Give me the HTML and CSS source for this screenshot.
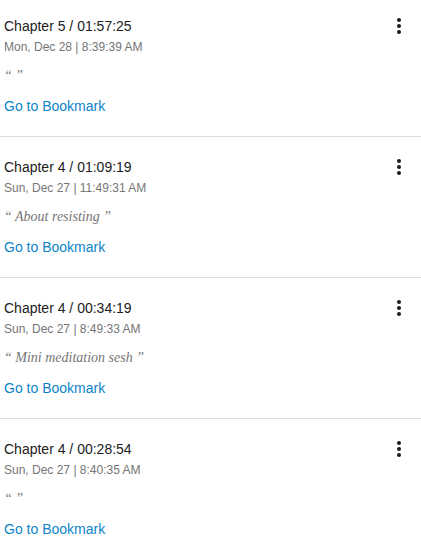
FILE: index.html
```html
<!DOCTYPE html>
<html>
<head>
<meta charset="utf-8">
<link rel="stylesheet" href="styles.css">
</head>
<body>
<div class="list">
  <div class="item">
    <div class="content">
      <div class="title">Chapter 5 / 01:57:25</div>
      <div class="date">Mon, Dec 28 | 8:39:39 AM</div>
      <div class="note">“ ”</div>
      <a class="link" href="#">Go to Bookmark</a>
    </div>
    <button class="more" aria-label="More"><svg viewBox="0 0 24 24" width="24" height="24"><circle cx="12" cy="6" r="2"/><circle cx="12" cy="12" r="2"/><circle cx="12" cy="18" r="2"/></svg></button>
  </div>
  <div class="item">
    <div class="content">
      <div class="title">Chapter 4 / 01:09:19</div>
      <div class="date">Sun, Dec 27 | 11:49:31 AM</div>
      <div class="note">“ About resisting ”</div>
      <a class="link" href="#">Go to Bookmark</a>
    </div>
    <button class="more" aria-label="More"><svg viewBox="0 0 24 24" width="24" height="24"><circle cx="12" cy="6" r="2"/><circle cx="12" cy="12" r="2"/><circle cx="12" cy="18" r="2"/></svg></button>
  </div>
  <div class="item">
    <div class="content">
      <div class="title">Chapter 4 / 00:34:19</div>
      <div class="date">Sun, Dec 27 | 8:49:33 AM</div>
      <div class="note">“ Mini meditation sesh ”</div>
      <a class="link" href="#">Go to Bookmark</a>
    </div>
    <button class="more" aria-label="More"><svg viewBox="0 0 24 24" width="24" height="24"><circle cx="12" cy="6" r="2"/><circle cx="12" cy="12" r="2"/><circle cx="12" cy="18" r="2"/></svg></button>
  </div>
  <div class="item">
    <div class="content">
      <div class="title">Chapter 4 / 00:28:54</div>
      <div class="date">Sun, Dec 27 | 8:40:35 AM</div>
      <div class="note">“ ”</div>
      <a class="link" href="#">Go to Bookmark</a>
    </div>
    <button class="more" aria-label="More"><svg viewBox="0 0 24 24" width="24" height="24"><circle cx="12" cy="6" r="2"/><circle cx="12" cy="12" r="2"/><circle cx="12" cy="18" r="2"/></svg></button>
  </div>
</div>
</body>
</html>
```
FILE: styles.css
```css
html, body {
  margin: 0;
  padding: 0;
  background: #ffffff;
  overflow: hidden;
}
body {
  font-family: "Liberation Sans", Arial, sans-serif;
}
.list {
  display: flex;
  flex-direction: column;
  margin-top: -4px;
}
.item {
  display: flex;
  align-items: flex-start;
  justify-content: space-between;
  padding: 18px 10px 0 4px;
  height: 122px;
  border-bottom: 1px solid #dddddd;
}
.content {
  display: flex;
  flex-direction: column;
  align-items: flex-start;
  padding-top: 3px;
}
.title {
  font-size: 14px;
  line-height: 18px;
  color: #212121;
}
.date {
  margin-top: 4px;
  font-size: 12px;
  line-height: 17px;
  color: #757575;
}
.note {
  margin-top: 11px;
  font-family: "Liberation Serif", "Times New Roman", serif;
  font-style: italic;
  font-size: 14px;
  line-height: 18px;
  color: #757575;
}
.link {
  margin-top: 12px;
  font-size: 14px;
  line-height: 18px;
  color: #0d84c7;
  text-decoration: none;
}
.more {
  display: flex;
  padding: 0;
  margin: 0;
  border: 0;
  background: none;
  width: 24px;
  height: 24px;
  color: #1a1a1a;
}
.more svg {
  fill: currentColor;
}
```
